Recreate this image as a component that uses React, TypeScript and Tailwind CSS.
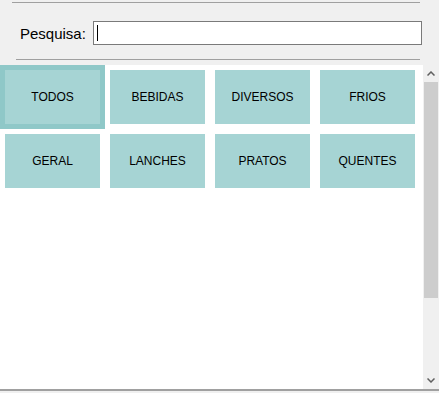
import React from "react";

const cats = ["TODOS", "BEBIDAS", "DIVERSOS", "FRIOS", "GERAL", "LANCHES", "PRATOS", "QUENTES"];

export default function App() {
  return (
    <div className="w-[439px] h-[393px] bg-[#f0f0f0] flex flex-col font-['Liberation_Sans',Arial,sans-serif] overflow-hidden">
      <div className="h-[65px] flex flex-col shrink-0">
        <div className="mt-[2px] ml-[12px] w-[408px] h-px bg-[#a0a0a0]" />
        <div className="mt-[18px] ml-[20px] h-[24px] flex items-center">
          <span className="w-[73px] text-[15px] text-black leading-none">Pesquisa:</span>
          <div className="w-[329px] h-[24px] bg-white border border-[#7a7a7a] flex items-center pl-[3px]">
            <div className="w-px h-[16px] bg-black" />
          </div>
        </div>
        <div className="mt-[14px] ml-[16px] w-[404px] h-px bg-[#a0a0a0]" />
      </div>
      <div className="h-[324px] flex shrink-0">
        <div className="w-[423px] bg-white">
          <div className="grid grid-cols-4 w-[420px]">
            {cats.map((c, i) =>
              i === 0 ? (
                <div key={c} className="h-[64px] border-[5px] border-[#8fc8c8] bg-[#a6d4d4] flex items-center justify-center text-[12px] text-black">
                  {c}
                </div>
              ) : (
                <div key={c} className="h-[64px] p-[5px]">
                  <div className="h-full bg-[#a6d4d4] flex items-center justify-center text-[12px] text-black">{c}</div>
                </div>
              )
            )}
          </div>
        </div>
        <div className="w-[16px] bg-[#f0f0f0] flex flex-col">
          <div className="h-[17px] flex items-center justify-center">
            <svg width="8" height="5" viewBox="0 0 8 5">
              <polyline points="0.5,4.5 4,1 7.5,4.5" fill="none" stroke="#606060" strokeWidth="1.5" />
            </svg>
          </div>
          <div className="h-[216px] mx-[1px] bg-[#cdcdcd]" />
          <div className="flex-1" />
          <div className="h-[17px] flex items-center justify-center">
            <svg width="8" height="5" viewBox="0 0 8 5">
              <polyline points="0.5,0.5 4,4 7.5,0.5" fill="none" stroke="#606060" strokeWidth="1.5" />
            </svg>
          </div>
        </div>
      </div>
      <div className="h-[2px] bg-[#a0a0a0] shrink-0" />
    </div>
  );
}
